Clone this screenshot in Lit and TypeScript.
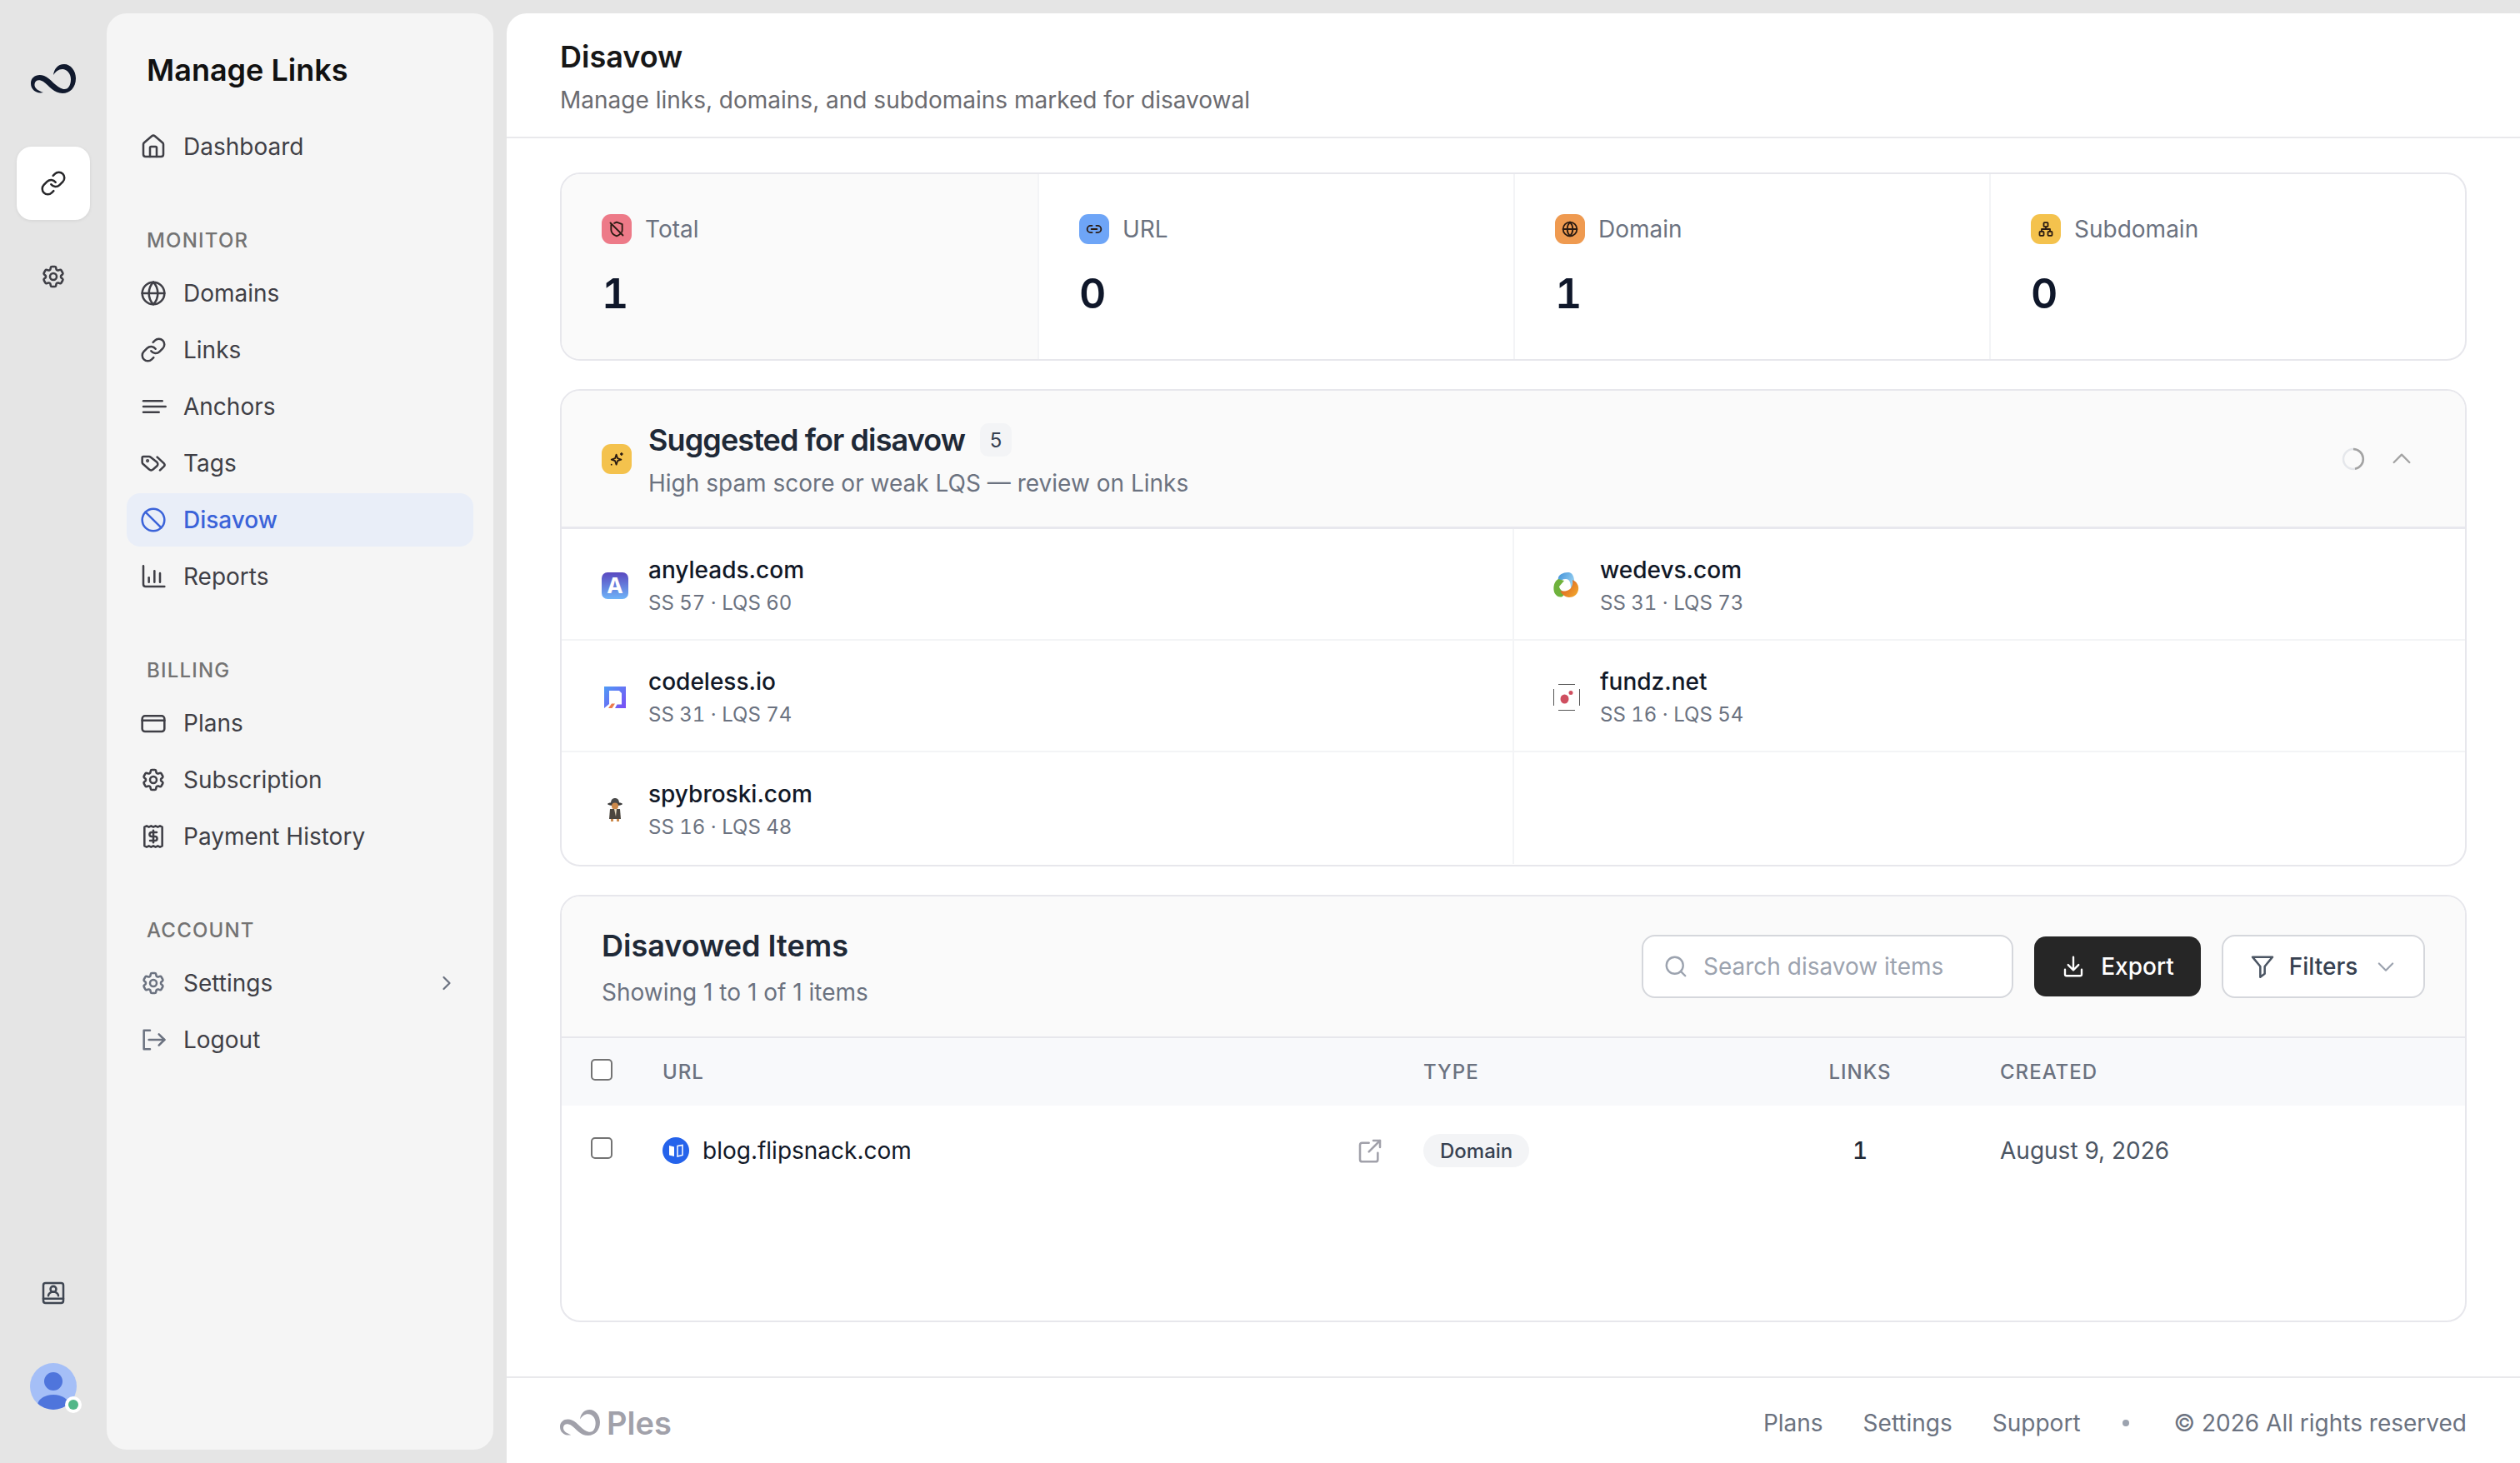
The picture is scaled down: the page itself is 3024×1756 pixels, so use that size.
import { LitElement, html, css, svg, TemplateResult } from "lit";
import { customElement } from "lit/decorators.js";

const LOGO = svg`<path d="M15 34C7 36 0 31 0 23C0 15 8 11 16 14C24 17 30 28 39 30C45 31 48 25 48 18C48 11 43 6 38 6C33 6 30 9 27 13C28 6 32 0 40 0C48 0 54 8 54 17C54 28 47 35 38 35C28 35 22 26 15 21C10 18 5 19 4.500 24C4 29 9 32 15 34Z"/>`;

const P = {
  link: svg`<path d="M10 13a5 5 0 0 0 7.54.54l3-3a5 5 0 0 0-7.07-7.07l-1.72 1.71"/><path d="M14 11a5 5 0 0 0-7.54-.54l-3 3a5 5 0 0 0 7.07 7.07l1.71-1.71"/>`,
  gear: svg`<path d="M9.594 3.94c.09-.542.56-.94 1.11-.94h2.593c.55 0 1.02.398 1.11.94l.213 1.281c.063.374.313.686.645.87.074.04.147.083.22.127.325.196.72.257 1.075.124l1.217-.456a1.125 1.125 0 0 1 1.37.49l1.296 2.247a1.125 1.125 0 0 1-.26 1.431l-1.003.827c-.293.241-.438.613-.43.992a7.723 7.723 0 0 1 0 .255c-.008.378.137.75.43.991l1.004.827c.424.35.534.955.26 1.43l-1.298 2.247a1.125 1.125 0 0 1-1.369.491l-1.217-.456c-.355-.133-.75-.072-1.076.124a6.47 6.47 0 0 1-.22.128c-.331.183-.581.495-.644.869l-.213 1.281c-.09.543-.56.94-1.11.94h-2.594c-.55 0-1.019-.398-1.11-.94l-.213-1.281c-.062-.374-.312-.686-.644-.87a6.52 6.52 0 0 1-.22-.127c-.325-.196-.72-.257-1.076-.124l-1.217.456a1.125 1.125 0 0 1-1.369-.49l-1.297-2.247a1.125 1.125 0 0 1 .26-1.431l1.004-.827c.292-.24.437-.613.43-.991a6.932 6.932 0 0 1 0-.255c.007-.38-.138-.751-.43-.992l-1.004-.827a1.125 1.125 0 0 1-.26-1.43l1.297-2.247a1.125 1.125 0 0 1 1.37-.491l1.216.456c.356.133.751.072 1.076-.124.072-.044.146-.086.22-.128.332-.183.582-.495.644-.869l.214-1.28Z"/><circle cx="12" cy="12" r="3"/>`,
  home: svg`<path d="M15 21v-8a1 1 0 0 0-1-1h-4a1 1 0 0 0-1 1v8"/><path d="M3 10a2 2 0 0 1 .709-1.528l7-5.999a2 2 0 0 1 2.582 0l7 5.999A2 2 0 0 1 21 10v9a2 2 0 0 1-2 2H5a2 2 0 0 1-2-2z"/>`,
  globe: svg`<circle cx="12" cy="12" r="10"/><path d="M2 12h20"/><path d="M12 2a14.5 14.5 0 0 0 0 20 14.5 14.5 0 0 0 0-20"/>`,
  lines: svg`<path d="M3 7h17"/><path d="M3 12h20"/><path d="M3 17h14"/>`,
  tags: svg`<path d="m15.5 6.5 6 5.6a2 2 0 0 1 0 2.8l-3.5 3.4"/><path d="M9.6 6.6A2 2 0 0 0 8.2 6H3a1 1 0 0 0-1 1v4.2a2 2 0 0 0 .6 1.4l5.7 5a2.4 2.4 0 0 0 3.4 0l3.6-3.1a2.4 2.4 0 0 0 0-3.4z"/><circle cx="6.8" cy="9.8" r=".6"/>`,
  ban: svg`<circle cx="12" cy="12" r="10"/><path d="m4.9 4.9 14.2 14.2"/>`,
  chart: svg`<path d="M3 2.5V19a2 2 0 0 0 2 2h17"/><path d="M8 17v-4"/><path d="M13 17V7"/><path d="M18 17v-8"/>`,
  card: svg`<rect x="2" y="5.5" width="20" height="14" rx="2.5"/><path d="M2 9.5h20"/>`,
  receipt: svg`<path d="M4 3.5l2 -1 2 1 2-1 2 1 2-1 2 1 2-1 2 1v17l-2 1-2-1-2 1-2-1-2 1-2-1-2 1-2-1z"/><path d="M15 8.2h-4.5a1.9 1.9 0 0 0 0 3.8h3a1.9 1.9 0 0 1 0 3.8H9"/><path d="M12 6.5v11"/>`,
  logout: svg`<path d="M9 3.5H3.5v17H9"/><path d="M8 12h14"/><path d="m17 7 5 5-5 5"/>`,
  chevR: svg`<path d="m9 6 6 6-6 6"/>`,
  chevU: svg`<path d="m5 15 7-7 7 7"/>`,
  chevD: svg`<path d="m5 9 7 7 7-7"/>`,
  contact: svg`<rect x="3" y="3" width="18" height="18" rx="2"/><path d="M3 17h18"/><circle cx="12" cy="8.5" r="2.6"/><path d="M7.5 14.5a4.5 3.6 0 0 1 9 0"/>`,
  shieldOff: svg`<path d="M3 3l18 18"/><path d="M8.500 3.500 12 2l8 3v8c0 1.200-.200 2.300-.6 3.300"/><path d="M4 6v7c0 4.500 3.500 7.500 8 9 2-.7 3.700-1.700 5-3"/>`,
  urlLink: svg`<path d="M9 17H7A5 5 0 0 1 7 7h2"/><path d="M15 7h2a5 5 0 1 1 0 10h-2"/><path d="M8 12h8"/>`,
  sitemap: svg`<rect x="9" y="2.500" width="6" height="6" rx="1"/><rect x="3" y="15.500" width="6" height="6" rx="1"/><rect x="15" y="15.500" width="6" height="6" rx="1"/><path d="M6 15.500V12h12v3.500M12 8.500V12"/>`,
  spark: svg`<path d="M11.500 5.500 13.300 11l5.200 1.800-5.200 1.800-1.800 5.400-1.800-5.400-5.200-1.800L9.700 11z"/><path d="M19 3.500v2.500M17.800 4.700h2.400"/><path d="M4.500 20v.01"/>`,
  search: svg`<circle cx="11" cy="11" r="8"/><path d="m21 21-4.300-4.300"/>`,
  download: svg`<path d="M12 3v12"/><path d="m7 10.500 5 5 5-5"/><path d="M4 15v4.500A1.500 1.500 0 0 0 5.500 21h13a1.500 1.500 0 0 0 1.500-1.500V15"/>`,
  funnel: svg`<path d="M3 3.500h18l-7 8.500v6.500L10 21.500V12z"/>`,
  ext: svg`<path d="M11 5H5a2 2 0 0 0-2 2v13a2 2 0 0 0 2 2h12a2 2 0 0 0 2-2v-6"/><path d="M11 13 21 3"/><path d="M15 3h6v6"/>`,
};

const icon = (p: unknown, cls = "ic"): TemplateResult =>
  html`<svg class=${cls} viewBox="0 0 24 24" fill="none" stroke="currentColor" stroke-linecap="round" stroke-linejoin="round">${p}</svg>`;

const favAnyleads = html`<span class="fav any">A</span>`;
const favWedevs = html`<svg class="favsvg" viewBox="0 0 32 32">
  <defs>
    <linearGradient id="wb" x1="0" y1="0" x2="1" y2=".6"><stop offset="0" stop-color="#3d8fd8"/><stop offset="1" stop-color="#9ad2f2"/></linearGradient>
    <linearGradient id="wo" x1="0" y1=".2" x2="1" y2="1"><stop offset="0" stop-color="#d9541e"/><stop offset="1" stop-color="#f4b12f"/></linearGradient>
  </defs>
  <path fill="url(#wb)" d="M6 6C8 1 14 0 19 0C24 1 26 8 25 17L21 20C21 13 20 8 15 8C11 8 8 10 5 13Z"/>
  <path fill="#6fb23c" d="M6 8L13 10L7 17C8 21 11 23 15 24L11 29C6 31 1 27 .5 21C0 15 2 10 6 8Z"/>
  <path fill="url(#wo)" d="M23 9C28 11 31 16 30 21C29 27 24 30 19 30C14 30 10 26 8 22C12 23 16 23 20 20C22 18 24 14 23 9Z"/>
</svg>`;
const favCodeless = html`<svg class="favsvg" viewBox="0 0 32 32">
  <defs><linearGradient id="cg" x1="0" y1="0" x2="1" y2="1"><stop offset="0" stop-color="#4f9cf5"/><stop offset="1" stop-color="#7a4cf5"/></linearGradient></defs>
  <path fill="url(#cg)" fill-rule="evenodd" d="M3 3h26v26H16l2.500-4.500H24V11l-3-3H9v16l-6 5z"/>
  <path fill="#ec7b4d" d="M8 29l4-5.500h4L12.500 29z"/>
</svg>`;
const favFundz = html`<svg class="favsvg" viewBox="0 0 32 32">
  <path fill="none" stroke="#555" stroke-width="1" d="M.5 6V26M31.500 6V26M6 .5H26M6 31.500H26" />
  <ellipse cx="13.500" cy="18" rx="5" ry="5.500" fill="#cf4f60"/><circle cx="21" cy="10.500" r="2.500" fill="#cf4f60"/>
</svg>`;
const favSpy = html`<svg class="favsvg" viewBox="0 0 32 32">
  <ellipse cx="16" cy="9" rx="9" ry="2" fill="#3d3d3d"/><path d="M11 8c0-4 2-6 5-6s5 2 5 6z" fill="#4a4a4a"/>
  <circle cx="16" cy="11.500" r="4" fill="#cc8a4c"/>
  <path d="M10 15h12l1 12H9z" fill="#4c463e"/><path d="M15 15h3l-1 9z" fill="#e8dcc2"/>
  <path d="M11 27h3v3h-3zM18 27h3v3h-3z" fill="#cc8a4c"/>
</svg>`;
const favFlip = html`<svg class="flipfav" viewBox="0 0 32 32">
  <circle cx="16" cy="16" r="16" fill="#2563eb"/>
  <path d="M8 10l6 1.500V23l-6-1.500z" fill="#fff"/><path d="M18 10.500l6-1v12l-6 1.500z" fill="none" stroke="#fff" stroke-width="1.500"/>
</svg>`;

const nav = [
  { items: [{ t: "Dashboard", i: P.home }] },
  {
    label: "MONITOR",
    items: [
      { t: "Domains", i: P.globe },
      { t: "Links", i: P.link },
      { t: "Anchors", i: P.lines },
      { t: "Tags", i: P.tags },
      { t: "Disavow", i: P.ban, active: true },
      { t: "Reports", i: P.chart },
    ],
  },
  {
    label: "BILLING",
    items: [
      { t: "Plans", i: P.card },
      { t: "Subscription", i: P.gear },
      { t: "Payment History", i: P.receipt },
    ],
  },
  {
    label: "ACCOUNT",
    items: [
      { t: "Settings", i: P.gear, muted: true, chev: true },
      { t: "Logout", i: P.logout, muted: true },
    ],
  },
];

const stats = [
  { l: "Total", v: "1", c: "red", i: P.shieldOff, first: true },
  { l: "URL", v: "0", c: "blue", i: P.urlLink },
  { l: "Domain", v: "1", c: "orange", i: P.globe },
  { l: "Subdomain", v: "0", c: "yellow", i: P.sitemap },
];

const sugg = [
  { n: "anyleads.com", m: "SS 57 · LQS 60", f: favAnyleads },
  { n: "wedevs.com", m: "SS 31 · LQS 73", f: favWedevs },
  { n: "codeless.io", m: "SS 31 · LQS 74", f: favCodeless },
  { n: "fundz.net", m: "SS 16 · LQS 54", f: favFundz },
  { n: "spybroski.com", m: "SS 16 · LQS 48", f: favSpy },
  null,
];

@customElement("app-root")
export class AppRoot extends LitElement {
  static styles = css`
    :host { display: block; width: 3024px; height: 1756px; overflow: hidden; background: #e5e5e5;
      font-family: Inter, "Liberation Sans", sans-serif; color: #111827; }
    * { box-sizing: border-box; }
    .root { display: flex; height: 1756px; }
    .rail { width: 128px; flex: none; display: flex; flex-direction: column; align-items: center; padding: 77px 0 64px; }
    .logo { width: 54px; height: 36px; fill: #111a2e; overflow: visible; }
    .railbtn { width: 88px; height: 88px; margin-top: 63px; border-radius: 18px; background: #fff; display: flex; align-items: center; justify-content: center;
      box-shadow: 0 1px 4px rgba(0,0,0,.08); color: #27272a; }
    .railgear { margin-top: 52px; color: #3f3f46; }
    .railbottom { margin-top: auto; color: #3f4652; display: flex; }
    .ic { width: 32px; height: 32px; stroke-width: 1.9; flex: none; display: block; }
    .avatar { position: relative; width: 56px; height: 56px; margin-top: 68px; }
    .avatar svg { width: 56px; height: 56px; display: block; }
    .dot { position: absolute; right: -6px; bottom: -4px; width: 20px; height: 20px; border-radius: 50%; background: #fff; display: flex; align-items: center; justify-content: center; }
    .dot::after { content: ""; width: 12px; height: 12px; border-radius: 50%; background: #52b788; }

    .side { width: 464px; flex: none; margin: 16px 0; background: #f5f5f5; border-radius: 24px; padding: 44px 24px 0; }
    .side h1 { margin: 0 0 36px 24px; font-size: 36px; line-height: 48px; font-weight: 600; color: #111; }
    .sec { margin-top: 69px; }
    .sec.first { margin-top: 0; }
    .lab { padding-left: 24px; font-size: 24px; line-height: 24px; margin-bottom: 19px; font-weight: 500; color: #737373; letter-spacing: 1.2px; }
    .items { display: flex; flex-direction: column; gap: 4px; }
    .it { height: 64px; display: flex; align-items: center; gap: 20px; padding: 0 16px; border-radius: 16px; font-size: 28px; color: #3f3f46; }
    .it.active { background: #e9eef8; color: #3b63d9; font-weight: 500; }
    .it.muted .ic { color: #6b7280; }
    .it .chev { margin-left: auto; width: 28px; height: 28px; margin-right: 2px; color: #9ca3af; }

    .main { flex: 1; min-width: 0; margin: 16px 0 0 16px; background: #fff; border-radius: 24px 0 0 0; display: flex; flex-direction: column; }
    .hdr { height: 150px; flex: none; padding: 8px 64px 0; border-bottom: 2px solid #e9e9ec; display: flex; flex-direction: column; justify-content: center; }
    .hdr h2 { margin: 0; font-size: 36px; line-height: 48px; font-weight: 600; color: #171717; }
    .hdr p { margin: 4px 0 0; font-size: 28px; line-height: 48px; color: #6b6b70; }
    .content { flex: 1; padding: 41px 64px 0; display: flex; flex-direction: column; gap: 34px; }

    .card { border: 2px solid #e7e7ec; border-radius: 24px; overflow: hidden; background: #fff; }
    .stats { height: 226px; display: grid; grid-template-columns: 571px 571px 571px 1fr; flex: none; }
    .st { padding: 48px 48px; border-left: 2px solid #f3f4f6; }
    .st.first { border-left: 0; background: #fafafa; padding-left: 48px; }
    .st .r { display: flex; align-items: center; gap: 16px; height: 36px; font-size: 28px; color: #6b7280; }
    .st .v { font-size: 50px; line-height: 60px; font-weight: 600; color: #0f172a; margin-top: 29px; font-variant-numeric: tabular-nums; }
    .badgeic { width: 36px; height: 36px; border-radius: 11px; display: flex; align-items: center; justify-content: center; flex: none; color: #2a1b12; }
    .badgeic .ic { width: 20px; height: 20px; stroke-width: 2.2; }
    .red { background: #ed7a88; } .blue { background: #6ea5f7; } .orange { background: #ef9a50; } .yellow { background: #f4c24d; }

    .sug { height: 573px; flex: none; }
    .sughead { height: 166px; border-bottom: 3px solid #e8e8ee; background: #fafafa; display: flex; align-items: center; padding: 0 48px; gap: 20px; }
    .ttl { font-size: 36px; line-height: 48px; font-weight: 600; color: #1f2937; }
    .ttl.tight { letter-spacing: -0.9px; }
    .sub { font-size: 28px; line-height: 40px; color: #6b7280; }
    .shead-txt { margin-top: 3px; }
    .tline { display: flex; align-items: center; gap: 18px; }
    .cnt { width: 38px; height: 40px; border-radius: 10px; background: #f3f4f6; font-size: 24px; display: flex; align-items: center; justify-content: center; color: #374151; }
    .sughead .sub { margin-top: 8px; }
    .ctl { margin-left: auto; display: flex; align-items: center; gap: 28px; margin-right: 12px; color: #a3a3a3; }
    .spin { width: 28px; height: 28px; }
    .ctl .ic { width: 32px; height: 32px; stroke-width: 1.75; }
    .sgrid { display: grid; grid-template-columns: 1141px 1fr; grid-auto-rows: 134px; }
    .sc { display: flex; align-items: center; gap: 24px; padding: 3px 0 0 48px; border-bottom: 2px solid #f3f4f6; }
    .sc:nth-child(even) { border-left: 2px solid #f3f4f6; padding-left: 47px; }
    .sc:nth-last-child(-n+2) { border-bottom: 0; }
    .sc .nm { font-size: 28px; line-height: 36px; font-weight: 500; color: #111827; }
    .sc .mt { font-size: 24px; line-height: 32px; margin-top: 6px; color: #6b7280; font-variant-numeric: tabular-nums; }
    .fav, .favsvg { width: 32px; height: 32px; flex: none; display: block; }
    .any { border-radius: 7px; background: linear-gradient(180deg,#5a48c0,#6fb4f8); color: #fff; font-weight: 700; font-size: 26px; line-height: 32px; text-align: center; }

    .tbl { height: 513px; flex: none; }
    .thead { height: 170px; background: #fafafa; border-bottom: 2px solid #e7e7ec; display: flex; align-items: center; padding: 0 48px; }
    .thead .txt { margin-top: 2px; }
    .thead .sub { margin-top: 12px; }
    .tools { margin-left: auto; display: flex; align-items: center; gap: 25px; }
    .srch { width: 446px; height: 76px; border: 2px solid #d5d7dc; background: #fff; border-radius: 16px; display: flex; align-items: center; gap: 18px; padding: 0 24px; font-size: 28px; color: #9ca3af; }
    .srch .ic { width: 30px; height: 30px; }
    .exp { width: 200px; height: 72px; border-radius: 14px; background: #262626; color: #fff; display: flex; align-items: center; justify-content: center; gap: 18px; font-size: 28px; font-weight: 500; }
    .exp .ic, .fil .ic { width: 30px; height: 30px; }
    .fil { width: 244px; height: 76px; border: 2px solid #d5d7dc; background: #fff; border-radius: 16px; display: flex; align-items: center; justify-content: center; gap: 16px; font-size: 28px; font-weight: 500; color: #374151; }
    .fil .funnel { color: #4b5563; width: 32px; height: 32px; }
    .fil .cd { width: 28px; height: 28px; color: #9ca3af; margin-left: 4px; }
    .tr { display: grid; grid-template-columns: 121px 913px 442px 164px 1fr; align-items: center; }
    .tr.h { height: 81px; background: #f8f9fb; font-size: 24px; font-weight: 500; color: #6b7280; letter-spacing: 1px; }
    .tr.b { height: 108px; font-size: 28px; }
    .ck { width: 26px; height: 26px; border: 2px solid #737373; border-radius: 5px; margin: 0 0 6px 35px; background: #fff; }
    .ctr { text-align: center; }
    .cl { padding-left: 86px; }
    .urlc { display: flex; align-items: center; gap: 16px; padding-right: 48px; color: #111827; }
    .flipfav { width: 32px; height: 32px; flex: none; }
    .urlc .e { margin-left: auto; color: #a1a1aa; }
    .pill { display: inline-flex; align-items: center; height: 40px; padding: 0 20px; border-radius: 20px; background: #f3f4f6; font-size: 24px; font-weight: 500; color: #374151; }
    .num { font-weight: 500; color: #1f2937; font-variant-numeric: tabular-nums; }
    .date { color: #4b5563; }

    .ftr { height: 105px; flex: none; margin-top: 65px; border-top: 2px solid #e9e9ec; display: flex; align-items: center; padding: 4px 64px 0; font-size: 28px; color: #6b7280; gap: 48px; }
    .brand { display: flex; align-items: center; gap: 8px; margin-right: auto; color: #a1a1aa; font-size: 38px; font-weight: 600; }
    .brand svg { width: 48px; height: 32px; fill: #a1a1aa; overflow: visible; }
    .sep { width: 8px; height: 8px; border-radius: 50%; background: #9ca3af; margin: 0 6px 0 2px; }
  `;

  render() {
    return html`<div class="root">
      <div class="rail">
        <svg class="logo" viewBox="0 0 54 36">${LOGO}</svg>
        <div class="railbtn">${icon(P.link)}</div>
        <div class="railgear">${icon(P.gear)}</div>
        <div class="railbottom">${icon(P.contact)}</div>
        <div class="avatar">
          <svg viewBox="0 0 56 56"><defs><clipPath id="av"><circle cx="28" cy="28" r="28"/></clipPath></defs>
            <circle cx="28" cy="28" r="28" fill="#a5bff7"/>
            <g clip-path="url(#av)"><circle cx="28" cy="22" r="11" fill="#4f75dc"/><ellipse cx="28" cy="51" rx="19" ry="13" fill="#4f75dc"/></g>
          </svg>
          <span class="dot"></span>
        </div>
      </div>

      <aside class="side">
        <h1>Manage Links</h1>
        ${nav.map((s, idx) => html`<div class="sec ${idx === 0 ? "first" : ""}">
          ${s.label ? html`<div class="lab">${s.label}</div>` : ""}
          <div class="items">
            ${s.items.map((it: any) => html`<div class="it ${it.active ? "active" : ""} ${it.muted ? "muted" : ""}">
              ${icon(it.i)}<span>${it.t}</span>${it.chev ? icon(P.chevR, "ic chev") : ""}
            </div>`)}
          </div>
        </div>`)}
      </aside>

      <main class="main">
        <header class="hdr">
          <h2>Disavow</h2>
          <p>Manage links, domains, and subdomains marked for disavowal</p>
        </header>
        <div class="content">
          <section class="card stats">
            ${stats.map((s) => html`<div class="st ${s.first ? "first" : ""}">
              <div class="r"><span class="badgeic ${s.c}">${icon(s.i)}</span>${s.l}</div>
              <div class="v">${s.v}</div>
            </div>`)}
          </section>

          <section class="card sug">
            <div class="sughead">
              <span class="badgeic yellow">${icon(P.spark)}</span>
              <div class="shead-txt">
                <div class="tline"><span class="ttl tight">Suggested for disavow</span><span class="cnt">5</span></div>
                <div class="sub">High spam score or weak LQS — review on Links</div>
              </div>
              <div class="ctl">
                <svg class="spin" viewBox="0 0 28 28" fill="none" stroke-width="2.500"><circle cx="14" cy="14" r="12" stroke="#e5e7eb"/><path d="M14 2a12 12 0 0 1 2 23.800" stroke="#a3a3a3"/></svg>
                ${icon(P.chevU)}
              </div>
            </div>
            <div class="sgrid">
              ${sugg.map((s) => s
                ? html`<div class="sc">${s.f}<div><div class="nm">${s.n}</div><div class="mt">${s.m}</div></div></div>`
                : html`<div class="sc"></div>`)}
            </div>
          </section>

          <section class="card tbl">
            <div class="thead">
              <div class="txt">
                <div class="ttl">Disavowed Items</div>
                <div class="sub">Showing 1 to 1 of 1 items</div>
              </div>
              <div class="tools">
                <div class="srch">${icon(P.search)}<span>Search disavow items</span></div>
                <div class="exp">${icon(P.download)}<span>Export</span></div>
                <div class="fil">${icon(P.funnel, "ic funnel")}<span>Filters</span>${icon(P.chevD, "ic cd")}</div>
              </div>
            </div>
            <div class="tr h"><div class="ck"></div><div>URL</div><div>TYPE</div><div class="ctr">LINKS</div><div class="cl">CREATED</div></div>
            <div class="tr b">
              <div class="ck"></div>
              <div class="urlc">${favFlip}<span>blog.flipsnack.com</span>${icon(P.ext, "ic e")}</div>
              <div><span class="pill">Domain</span></div>
              <div class="ctr num">1</div>
              <div class="cl date">August 9, 2026</div>
            </div>
          </section>
        </div>
        <footer class="ftr">
          <div class="brand"><svg viewBox="0 0 54 36">${LOGO}</svg>Ples</div>
          <span>Plans</span><span>Settings</span><span>Support</span><span class="sep"></span><span>© 2026 All rights reserved</span>
        </footer>
      </main>
    </div>`;
  }
}
